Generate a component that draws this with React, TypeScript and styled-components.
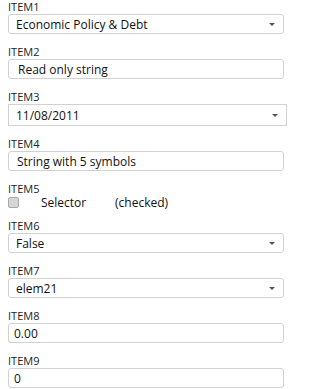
import React from "react";
import styled, { createGlobalStyle } from "styled-components";

const GlobalStyle = createGlobalStyle`
  body {
    margin: 0;
    background: #ffffff;
    font-family: "Open Sans", "Liberation Sans", Arial, sans-serif;
    color: #1a1a1a;
  }
`;

const Form = styled.div`
  display: flex;
  flex-direction: column;
  padding: 0 0 0 8px;
  width: 303px;
`;

const Field = styled.div`
  display: flex;
  flex-direction: column;
  margin-bottom: 11px;
`;

const Label = styled.div`
  font-size: 11px;
  line-height: 14px;
  height: 14px;
  color: #222;
`;

const Box = styled.div<{ $square?: boolean; $pad?: number }>`
  display: flex;
  align-items: center;
  box-sizing: border-box;
  width: ${(p) => (p.$square ? 279 : 276)}px;
  height: ${(p) => (p.$square ? 22 : 20)}px;
  border: 1px solid #cfd2cf;
  border-radius: ${(p) => (p.$square ? 0 : 3)}px;
  padding-left: ${(p) => p.$pad ?? 7}px;
  padding-right: 8px;
  font-size: 12px;
  color: #111;
  background: #fff;
`;

const Value = styled.span`
  flex: 1;
  white-space: nowrap;
`;

const Caret = styled.span`
  width: 0;
  height: 0;
  border-left: 3px solid transparent;
  border-right: 3px solid transparent;
  border-top: 3px solid #555;
`;

const CheckRow = styled.div`
  display: flex;
  align-items: center;
  height: 12px;
  font-size: 12px;
  color: #111;
`;

const CheckBox = styled.span`
  box-sizing: border-box;
  width: 11px;
  height: 11px;
  border: 1px solid #a9a9a9;
  border-radius: 2px;
  background: #d6d6d6;
  margin-right: 22px;
`;

const CheckText = styled.span<{ $w?: number }>`
  display: inline-block;
  width: ${(p) => (p.$w ? `${p.$w}px` : "auto")};
`;

type Item = {
  label: string;
  value: string;
  select?: boolean;
  square?: boolean;
  pad?: number;
};

const items: Item[] = [
  { label: "ITEM1", value: "Economic Policy & Debt", select: true },
  { label: "ITEM2", value: "Read only string", pad: 9 },
  { label: "ITEM3", value: "11/08/2011", select: true, square: true },
  { label: "ITEM4", value: "String with 5 symbols", pad: 8 },
];

const rest: Item[] = [
  { label: "ITEM6", value: "False", select: true },
  { label: "ITEM7", value: "elem21", select: true },
  { label: "ITEM8", value: "0.00", pad: 5 },
  { label: "ITEM9", value: "0", pad: 5 },
];

function Input({ item }: { item: Item }) {
  return (
    <Field>
      <Label>{item.label}</Label>
      <Box $square={item.square} $pad={item.pad}>
        <Value>{item.value}</Value>
        {item.select && <Caret />}
      </Box>
    </Field>
  );
}

export default function App() {
  return (
    <>
      <GlobalStyle />
      <Form>
        {items.map((item) => (
          <Input key={item.label} item={item} />
        ))}
        <Field>
          <Label>ITEM5</Label>
          <CheckRow>
            <CheckBox />
            <CheckText $w={74}>Selector</CheckText>
            <CheckText>(checked)</CheckText>
          </CheckRow>
        </Field>
        {rest.map((item) => (
          <Input key={item.label} item={item} />
        ))}
      </Form>
    </>
  );
}
